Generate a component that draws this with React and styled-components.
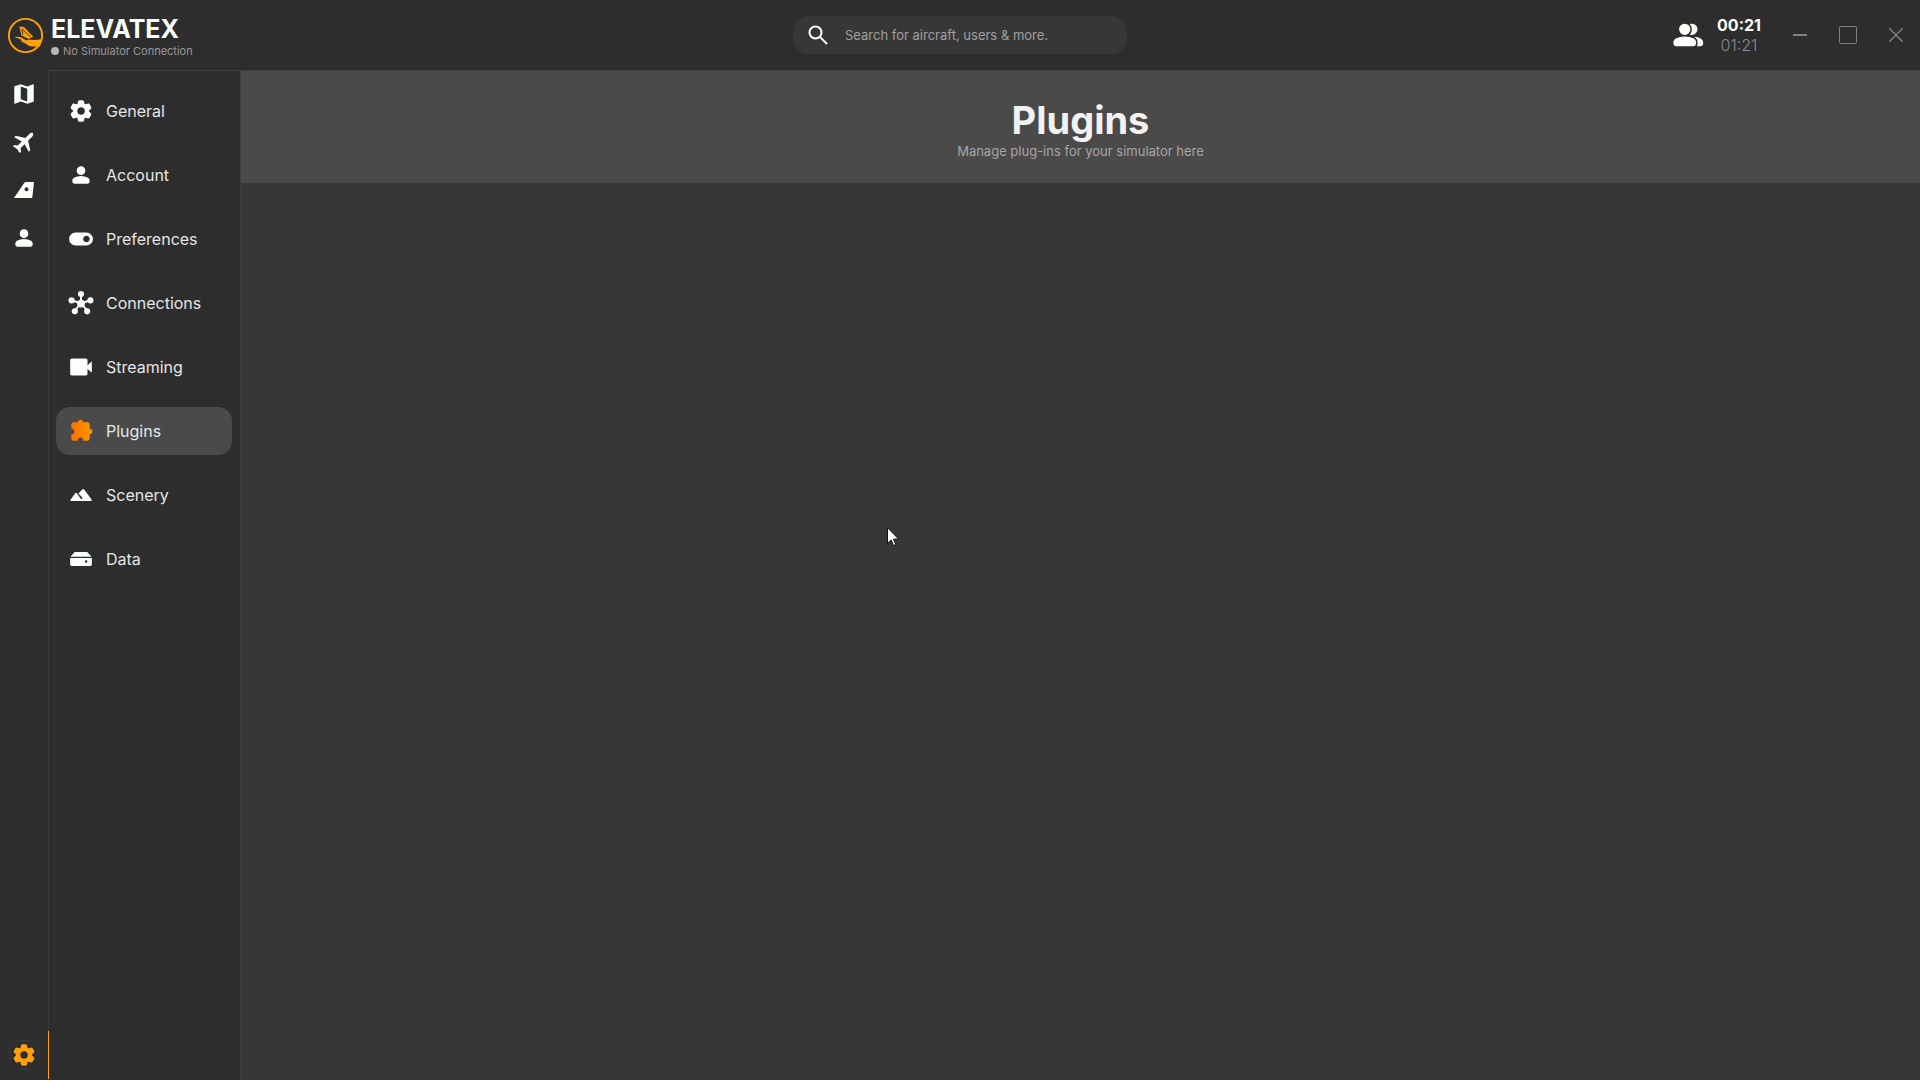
import React from 'react';
import styled, { createGlobalStyle } from 'styled-components';
import { MdMap } from 'react-icons/md';

const GlobalStyle = createGlobalStyle`
  * {
    box-sizing: border-box;
  }
  body {
    margin: 0;
    background: #373737;
    color: #e6e6e6;
    font-family: Inter, "Liberation Sans", sans-serif;
  }
  button {
    padding: 0;
    border: 0;
    background: none;
    color: inherit;
    font: inherit;
    cursor: pointer;
  }
`;

const Page = styled.div`
  display: flex;
  flex-direction: column;
  min-height: 100vh;
`;

const TopBar = styled.header`
  display: grid;
  grid-template-columns: 1fr 334px 1fr;
  align-items: center;
  height: 70px;
  background: #2d2d2d;
`;

const Brand = styled.div`
  display: flex;
  align-items: center;
  gap: 7px;
  padding-left: 7px;
`;

const BrandText = styled.div`
  padding-top: 4px;
`;

const BrandName = styled.div`
  color: #fafffa;
  font-size: 25px;
  font-weight: 700;
  line-height: 28px;
`;

const Status = styled.div`
  display: flex;
  align-items: center;
  gap: 4px;
  color: #9a9a9a;
  font-size: 11px;
  line-height: 16px;

  &::before {
    content: "";
    width: 8px;
    height: 8px;
    border-radius: 50%;
    background: #b4b8b8;
  }
`;

const SearchBox = styled.label`
  display: flex;
  align-items: center;
  gap: 15px;
  height: 38px;
  padding: 0 13px;
  border-radius: 16px;
  background: #373737;
  color: #fafffa;
`;

const SearchInput = styled.input`
  flex: 1;
  min-width: 0;
  padding: 0;
  border: 0;
  outline: 0;
  background: none;
  color: #e6e6e6;
  font: inherit;
  font-size: 13px;

  &::placeholder {
    color: #a0a0a0;
    opacity: 1;
  }
`;

const TopRight = styled.div`
  display: flex;
  align-items: center;
  justify-content: flex-end;
`;

const FriendsButton = styled.button`
  display: flex;
  color: #fafffa;
`;

const Clock = styled.div`
  width: 66px;
  margin-right: 4px;
  text-align: center;
  font-size: 16px;
  line-height: 20px;
`;

const LocalTime = styled.div`
  color: #fafffa;
  font-weight: 700;
`;

const ZuluTime = styled.div`
  color: #8c8c8c;
  font-weight: 300;
`;

const WindowButton = styled.button`
  display: flex;
  align-items: center;
  justify-content: center;
  width: 48px;
  height: 48px;
  color: #808080;
`;

const Body = styled.div`
  display: flex;
  flex: 1;
`;

const Rail = styled.nav`
  display: flex;
  flex-direction: column;
  width: 49px;
  padding-bottom: 1px;
  border-right: 1px solid #3a3a3a;
  background: #2d2d2d;
`;

const RailButton = styled.button`
  display: flex;
  align-items: center;
  justify-content: center;
  height: 48px;
  margin-top: ${({ $active }) => ($active ? 'auto' : '0')};
  margin-right: ${({ $active }) => ($active ? '-1px' : '0')};
  border-right: ${({ $active }) => ($active ? '1px solid #ffa00a' : '0')};
  color: ${({ $active }) => ($active ? '#ffa00a' : '#fafffa')};
`;

const RailBadge = styled.span`
  display: flex;
  align-items: center;
  justify-content: center;
  width: 30px;
  height: 30px;
  border: 1px solid ${({ $active }) => ($active ? '#373737' : 'transparent')};
  border-radius: 8px;
`;

const Sidebar = styled.nav`
  display: flex;
  flex-direction: column;
  gap: 16px;
  width: 192px;
  padding: 16px 8px 16px 7px;
  border: 1px solid #404040;
  border-width: 1px 1px 0 0;
  background: #2d2d2d;
`;

const SidebarItem = styled.button`
  display: flex;
  align-items: center;
  gap: 12px;
  height: 48px;
  padding-left: 12px;
  border-radius: 14px;
  background: ${({ $active }) => ($active ? '#4a4a4a' : 'transparent')};
  font-size: 16px;
  text-align: left;

  svg {
    color: #fafffa;
  }
`;

const Content = styled.main`
  flex: 1;
  min-width: 0;
`;

const PageHeader = styled.div`
  display: flex;
  flex-direction: column;
  align-items: center;
  height: 113px;
  padding-top: 28px;
  border-top: 1px solid #404040;
  background: #4a4a4a;
`;

const Title = styled.h1`
  margin: 0;
  color: #f2f2f2;
  font-size: 38px;
  font-weight: 700;
  line-height: 42px;
`;

const Subtitle = styled.p`
  margin: 0;
  color: #a6a6a6;
  font-size: 13px;
  line-height: 20px;
`;

const Pointer = styled.svg`
  position: fixed;
  left: 887px;
  top: 527px;
  pointer-events: none;
`;

function Symbol({ children }) {
  return (
    <svg width="26" height="26" viewBox="0 -960 960 960" fill="currentColor" aria-hidden="true">
      {children}
    </svg>
  );
}

const GearIcon = () => (
  <Symbol>
    <path
      fillRule="evenodd"
      d="M433-80q-27 0-46.5-18T363-142l-9-66q-13-5-24.5-12T307-235l-62 26q-25 11-50 2t-39-32l-47-82q-14-23-8-49t27-43l53-40q-1-7-1-13.5v-27q0-6.5 1-13.5l-53-40q-21-17-27-43t8-49l47-82q14-23 39-32t50 2l62 26q11-8 23-15t24-12l9-66q4-26 23.5-44t46.5-18h94q27 0 46.5 18t23.5 44l9 66q13 5 24.5 12t22.5 15l62-26q25-11 50-2t39 32l47 82q14 23 8 49t-27 43l-53 40q1 7 1 13.5v27q0 6.5-2 13.5l53 40q21 17 27 43t-8 49l-48 82q-14 23-39 32t-50-2l-60-26q-11 8-23 15t-24 12l-9 66q-4 26-23.5 44T527-80h-94Zm49-260q58 0 99-41t41-99q0-58-41-99t-99-41q-59 0-99.5 41T342-480q0 58 40.5 99t99.5 41Z"
    />
  </Symbol>
);

const PersonIcon = () => (
  <Symbol>
    <path d="M480-480q-66 0-113-47t-47-113q0-66 47-113t113-47q66 0 113 47t47 113q0 66-47 113t-113 47ZM160-240v-32q0-34 17.5-62.5T224-378q62-31 126-46.5T480-440q66 0 130 15.5T736-378q29 15 46.5 43.5T800-272v32q0 33-23.5 56.5T720-160H240q-33 0-56.5-23.5T160-240Z" />
  </Symbol>
);

const ToggleIcon = () => (
  <Symbol>
    <path d="M280-240q-100 0-170-70T40-480q0-100 70-170t170-70h400q100 0 170 70t70 170q0 100-70 170t-170 70H280Zm400-120q50 0 85-35t35-85q0-50-35-85t-85-35q-50 0-85 35t-35 85q0 50 35 85t85 35Z" />
  </Symbol>
);

const HubIcon = () => (
  <svg width="26" height="26" viewBox="0 0 24 24" fill="currentColor" aria-hidden="true">
    <g stroke="currentColor" strokeWidth="1.8">
      <path d="M12 12V4M12 12.500L3.500 9.500M12 12.500l8.500-3M12 12l-6 7.500M12 12l6 7.500" />
    </g>
    <circle cx="12" cy="12.500" r="3.600" />
    <circle cx="12" cy="3.800" r="2.800" />
    <circle cx="3.300" cy="9.600" r="2.800" />
    <circle cx="20.700" cy="9.600" r="2.800" />
    <circle cx="6.300" cy="19.700" r="2.800" />
    <circle cx="17.700" cy="19.700" r="2.800" />
  </svg>
);

const CameraIcon = () => (
  <Symbol>
    <path d="M140-170q-28 0-44-16t-16-44v-500q0-28 16-44t44-16h520q28 0 44 16t16 44v190l126-126q10-10 22-5t12 19v344q0 14-12 19t-22-5L720-420v190q0 28-16 44t-44 16H140Z" />
  </Symbol>
);

const MountainIcon = () => (
  <Symbol>
    <path d="M110-260q-45 0-22-40l177-245q30-35 60 0l150 200q28 25 46 3t-2-53L385-535l145-150q35-35 65 0l277 375q20 50-25 50z" />
  </Symbol>
);

const DriveIcon = () => (
  <Symbol>
    <path d="M90-565l150-160q14-15 34-15h412q20 0 34 15l150 160z" />
    <path
      fillRule="evenodd"
      d="M80-520h800v230q0 30-20 50t-50 20H150q-30 0-50-20t-20-50zM670-345a45 45 0 1 0 0-90 45 45 0 0 0 0 90z"
    />
  </Symbol>
);

const PlugIcon = () => (
  <svg width="26" height="26" viewBox="0 0 24 24" aria-hidden="true">
    <defs>
      <linearGradient id="plug" x1="0" x2="1">
        <stop offset="0" stopColor="#ff6f00" />
        <stop offset="1" stopColor="#ff9800" />
      </linearGradient>
    </defs>
    <path
      fill="url(#plug)"
      d="M8.800 21H5q-.825 0-1.413-.587T3 19v-3.800q1.200 0 2.100-.762T6 12.500t-.9-1.937T3 9.800V6q0-.825.588-1.412T5 4h4q0-1.050.725-1.775T11.500 1.500t1.775.725T14 4h4q.825 0 1.413.588T20 6v4q1.050 0 1.775.725t.725 1.775t-.725 1.775T20 15v4q0 .825-.587 1.413T18 21h-3.800q0-1.250-.787-2.125T11.500 18t-1.912.875T8.800 21"
    />
  </svg>
);

const PlaneIcon = () => (
  <svg width="26" height="26" viewBox="0 0 24 24" fill="currentColor" aria-hidden="true">
    <g transform="rotate(45 12 12)">
      <path d="M21.500 15.300v-2l-7.700-4.800V3.200C13.800 1.800 13 .5 12 .5s-1.800 1.300-1.800 2.700v5.300l-7.700 4.800v2l7.700-2.300V18.300l-2.700 2v1.700l4.500-1 4.500 1v-1.700l-2.700-2V13z" />
    </g>
  </svg>
);

const TailIcon = () => (
  <svg width="26" height="26" viewBox="0 0 26 26" fill="currentColor" aria-hidden="true">
    <path
      fillRule="evenodd"
      d="M3 21L13 6.200q.8-1.200 2-1.200h8l-1.600 15q-.2 1-1.200 1zM15.500 14.300a2 2 0 1 0 0-4 2 2 0 0 0 0 4z"
    />
  </svg>
);

const FriendsIcon = () => (
  <svg width="34" height="34" viewBox="0 0 24 24" fill="currentColor" aria-hidden="true">
    <path d="M1 18v-.8q0-.85.438-1.562T2.600 14.550q1.550-.775 3.150-1.162T9 13t3.250.388 3.150 1.162q.725.375 1.163 1.087T17 17.200v.8q0 .825-.587 1.413T15 20H3q-.825 0-1.412-.587T1 18M17.550 20q.225-.4.338-.9T18 18v-1q0-1.100-.612-2.112T15.650 13.150q1.275.15 2.400.512t2.100.888q.9.500 1.375 1.112T22 17v1q0 .825-.587 1.413T20 20zM9 12q-1.650 0-2.825-1.175T5 8t1.175-2.825T9 4t2.825 1.175T13 8t-1.175 2.825T9 12m9-4q0 1.650-1.175 2.825T14 12q-.275 0-.7-.062t-.7-.138q.675-.8 1.038-1.775T14 8t-.362-2.025T12.600 4.200q.35-.125.7-.162T14 4q1.650 0 2.825 1.175T18 8" />
  </svg>
);

const SearchIcon = () => (
  <svg width="24" height="24" viewBox="0 0 24 24" fill="none" stroke="currentColor" strokeWidth="2" aria-hidden="true">
    <circle cx="9.500" cy="9.500" r="6" />
    <path d="M14 14l7 7" />
  </svg>
);

const Logo = () => (
  <svg width="37" height="37" viewBox="0 0 37 37" aria-hidden="true">
    <circle cx="18.500" cy="18.500" r="16.600" fill="none" stroke="#ffa00a" strokeWidth="1.900" />
    <path fill="#ffa00a" d="M12.300 9.500l4.700.4 9.200 9.800-4.700 2.300-7.200-3.700z" />
    <path fill="none" stroke="#2d2d2d" strokeWidth=".9" d="M14.800 11.500l8.700 8.500M14.800 12.500l1.200 5" />
    <path fill="#ffa00a" d="M7 20q4-.8 7 .2l6 3.600-6.300.4q2-1.200-1-2.200z" />
    <path fill="#ffa00a" d="M13.700 24.200q4 .3 8.300-1.600 6 1 12.300-.4L33 29.500h-7q-5-.3-7-2.700z" />
  </svg>
);

const railItems = [
  { label: 'Map', icon: <MdMap size={26} /> },
  { label: 'Flights', icon: <PlaneIcon /> },
  { label: 'Fleet', icon: <TailIcon /> },
  { label: 'Profile', icon: <PersonIcon /> },
  { label: 'Settings', icon: <GearIcon />, active: true },
];

const sections = [
  { label: 'General', icon: <GearIcon /> },
  { label: 'Account', icon: <PersonIcon /> },
  { label: 'Preferences', icon: <ToggleIcon /> },
  { label: 'Connections', icon: <HubIcon /> },
  { label: 'Streaming', icon: <CameraIcon /> },
  { label: 'Plugins', icon: <PlugIcon />, active: true },
  { label: 'Scenery', icon: <MountainIcon /> },
  { label: 'Data', icon: <DriveIcon /> },
];

export default function App() {
  return (
    <Page>
      <GlobalStyle />
      <TopBar>
        <Brand>
          <Logo />
          <BrandText>
            <BrandName>ELEVATEX</BrandName>
            <Status>No Simulator Connection</Status>
          </BrandText>
        </Brand>
        <SearchBox>
          <SearchIcon />
          <SearchInput type="text" aria-label="Search" placeholder="Search for aircraft, users & more." />
        </SearchBox>
        <TopRight>
          <FriendsButton aria-label="Friends">
            <FriendsIcon />
          </FriendsButton>
          <Clock>
            <LocalTime>00:21</LocalTime>
            <ZuluTime>01:21</ZuluTime>
          </Clock>
          <WindowButton aria-label="Minimize">
            <svg width="14" height="2"><path d="M0 1h14" stroke="currentColor" strokeWidth="2" /></svg>
          </WindowButton>
          <WindowButton aria-label="Maximize">
            <svg width="18" height="18">
              <rect x="0.5" y="0.5" width="17" height="17" rx="1" fill="none" stroke="currentColor" />
            </svg>
          </WindowButton>
          <WindowButton aria-label="Close">
            <svg width="14" height="14">
              <path d="M0 0l14 14M14 0L0 14" stroke="currentColor" strokeWidth="1.400" />
            </svg>
          </WindowButton>
        </TopRight>
      </TopBar>
      <Body>
        <Rail>
          {railItems.map(({ label, icon, active }) => (
            <RailButton key={label} $active={active} aria-label={label}>
              <RailBadge $active={active}>{icon}</RailBadge>
            </RailButton>
          ))}
        </Rail>
        <Sidebar>
          {sections.map(({ label, icon, active }) => (
            <SidebarItem key={label} $active={active}>
              {icon}
              {label}
            </SidebarItem>
          ))}
        </Sidebar>
        <Content>
          <PageHeader>
            <Title>Plugins</Title>
            <Subtitle>Manage plug-ins for your simulator here</Subtitle>
          </PageHeader>
        </Content>
      </Body>
      <Pointer width="12" height="20" viewBox="0 0 12 20" aria-hidden="true">
        <path d="M.5.500v16l3.700-3.500 2.400 5.600 2.300-1-2.400-5.500h5z" fill="#fff" stroke="#10101c" />
      </Pointer>
    </Page>
  );
}
